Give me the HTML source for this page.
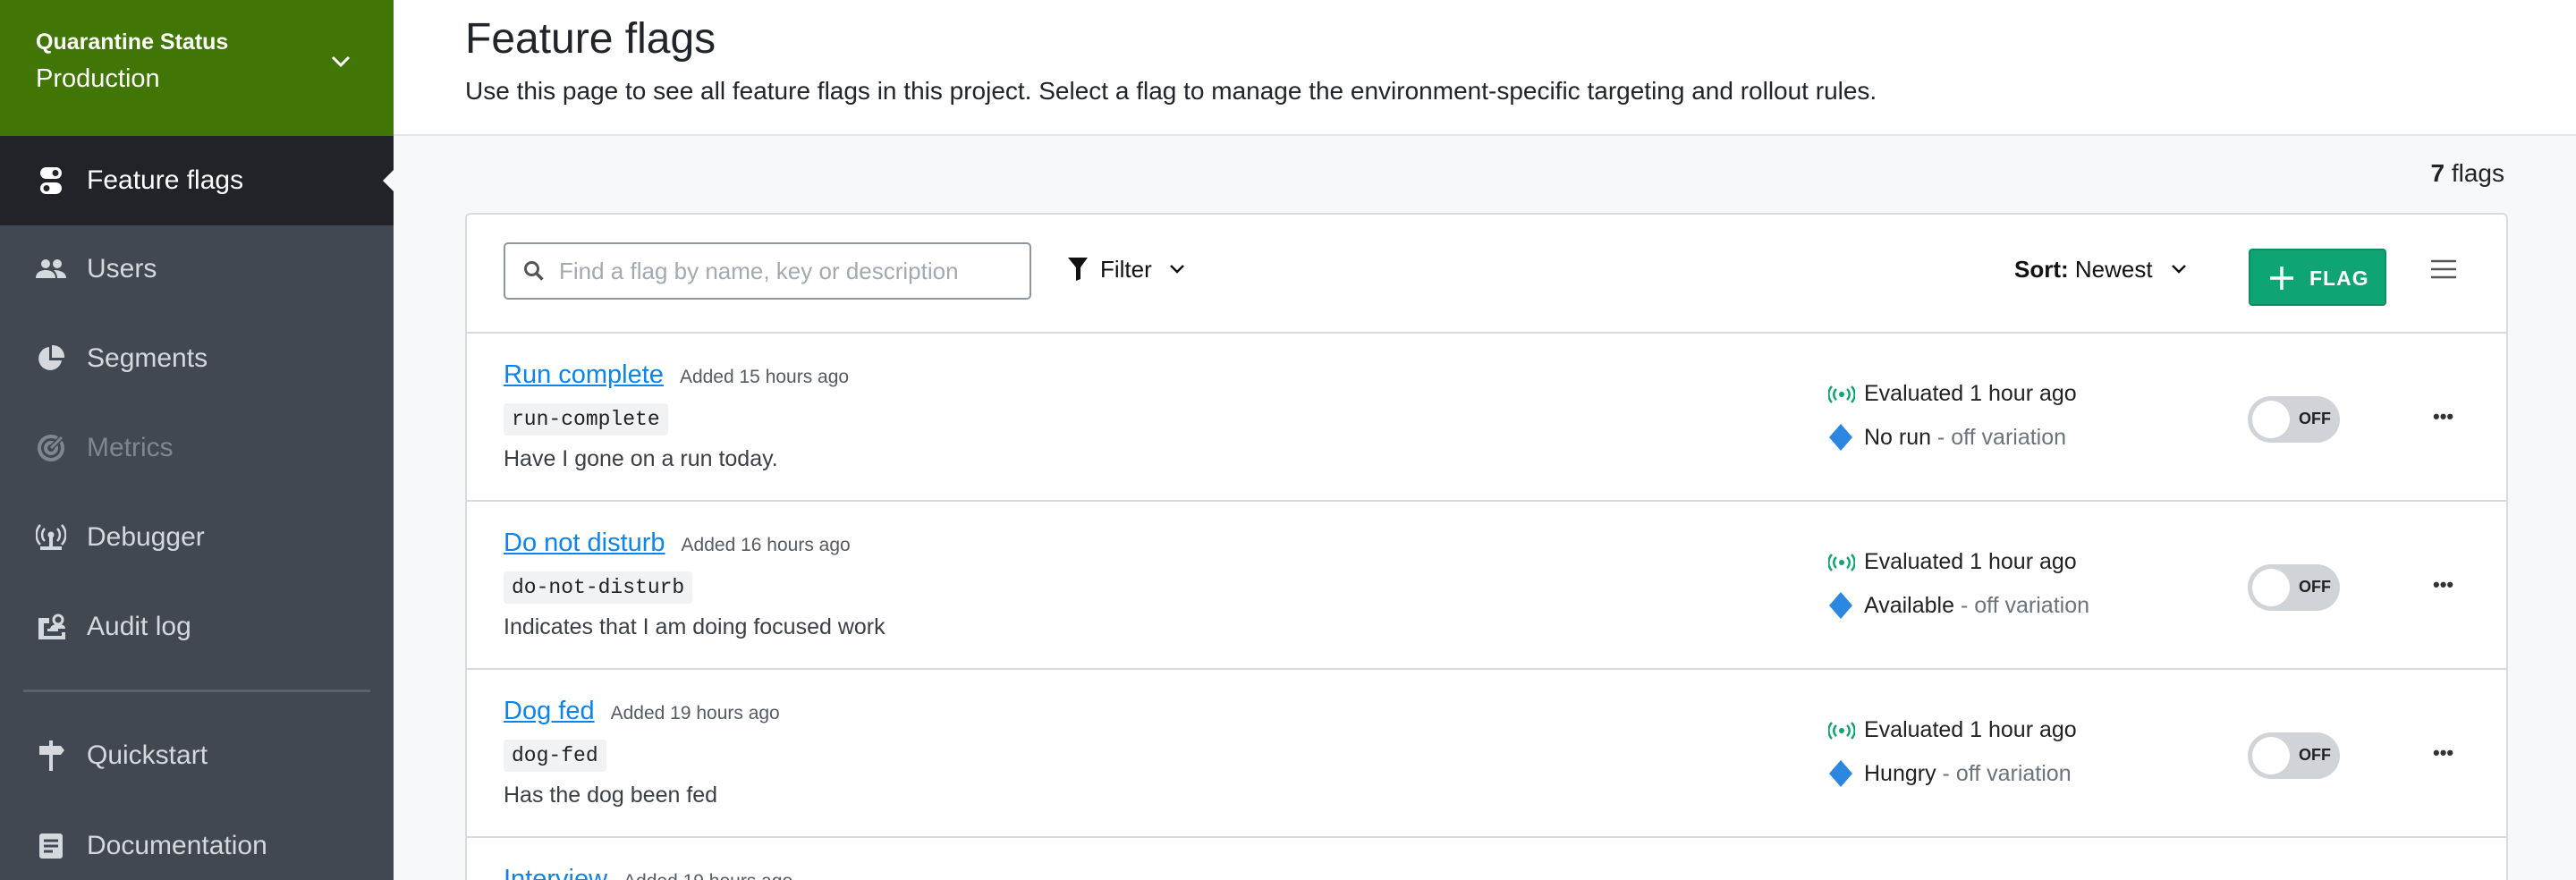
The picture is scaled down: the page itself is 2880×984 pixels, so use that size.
<!DOCTYPE html>
<html style="width:2880px;height:984px;overflow:hidden"><head><meta charset="utf-8"><style>
*{box-sizing:border-box;margin:0;padding:0}
body{width:2880px;height:984px;overflow:hidden;font-family:"Liberation Sans",sans-serif;background:#f7f8fa;position:relative;color:#212529}
.abs{position:absolute}
#side{left:0;top:0;width:440px;height:984px;background:#414851}
#env{left:0;top:0;width:440px;height:152px;background:#417505;color:#fff}
.nav{position:absolute;left:0;width:440px;height:100px;display:flex;align-items:center;color:#d5d9de;font-size:30px}
.nav .ic{width:34px;height:34px;margin-left:40px;margin-right:23px;display:flex;align-items:center;justify-content:center}
#main-h{left:440px;top:0;width:2440px;height:152px;background:#fff;border-bottom:2px solid #e2e5e9}
#card{left:520px;top:238px;width:2284px;height:746px;background:#fff;border:2px solid #d8dce1;border-bottom:none;border-radius:6px 6px 0 0;overflow:hidden}
.row{position:absolute;left:0;width:2280px;height:188px;border-top:2px solid #d8dce1}
.link{position:absolute;left:41px;top:30px;font-size:29px;color:#0d84ea;text-decoration:underline}
.added{font-size:21px;color:#555b62;margin-left:18px;text-decoration:none;display:inline-block}
.code{position:absolute;left:41px;top:78px;background:#f1f2f4;font-family:"Liberation Mono",monospace;font-size:23px;padding:5px 9px;border-radius:4px;color:#222}
.desc{position:absolute;left:41px;top:126px;font-size:25px;color:#3a3f45}
.ev{position:absolute;left:1522px;top:53px;font-size:25px;color:#222;display:flex;align-items:center}
.va{position:absolute;left:1522px;top:101px;font-size:25px;color:#222;display:flex;align-items:center}
.va span{color:#6b737c}
.tog{position:absolute;left:1991px;top:70px;width:103px;height:52px;border-radius:26px;background:#d0d4d9}
.tog:before{content:"";position:absolute;left:5px;top:5px;width:42px;height:42px;border-radius:50%;background:#fff}
.tog b{position:absolute;left:57px;top:15px;font-size:18px;color:#222}
.dots{position:absolute;left:2198px;top:88px;font-size:22px;letter-spacing:0px;line-height:10px;font-weight:bold;color:#333}
</style></head><body>
<div id="side" class="abs"></div>
<div id="env" class="abs">
 <div class="abs" style="left:40px;top:33px;font-size:25px;font-weight:bold">Quarantine Status</div>
 <div class="abs" style="left:40px;top:72px;font-size:29px">Production</div>
 <svg class="abs" style="left:368px;top:60px" width="26" height="18" viewBox="0 0 26 18"><path d="M4 4l9 9 9-9" stroke="#fff" stroke-width="3" fill="none"/></svg>
</div>
<div class="nav" style="top:152px;height:100px;background:#212328;color:#fff">
 <div class="ic"><svg width="26" height="34" viewBox="0 0 26 34"><rect x="1" y="2" width="24" height="13" rx="6.5" fill="#fff"/><rect x="1" y="19" width="24" height="13" rx="6.5" fill="#fff"/><circle cx="18" cy="8.5" r="3.5" fill="#212328"/><circle cx="8" cy="25.5" r="3.5" fill="#212328"/></svg></div>Feature flags
 <div class="abs" style="left:428px;top:37px;width:0;height:0;border-top:13px solid transparent;border-bottom:13px solid transparent;border-right:13px solid #f7f8fa"></div>
</div>
<div class="nav" style="top:251px"><div class="ic"><svg width="34" height="24" viewBox="0 0 34 24"><circle cx="11" cy="6" r="5" fill="#d5d9de"/><circle cx="24" cy="6" r="5" fill="#d5d9de"/><path d="M0 22c0-6 5-9 11-9s11 3 11 9z M20 13c6 0 14 2 14 9h-10c0-4-2-7-4-9z" fill="#d5d9de"/></svg></div>Users</div>
<div class="nav" style="top:351px"><div class="ic"><svg width="32" height="32" viewBox="0 0 32 32"><path d="M14 3a13 13 0 1 0 14 15H14z" fill="#d5d9de"/><path d="M17 1a13 13 0 0 1 14 14H17z" fill="#d5d9de"/></svg></div>Segments</div>
<div class="nav" style="top:451px;color:#7f868e"><div class="ic"><svg width="32" height="32" viewBox="0 0 32 32"><circle cx="16" cy="16" r="13" stroke="#7f868e" stroke-width="4" fill="none"/><circle cx="16" cy="16" r="6" stroke="#7f868e" stroke-width="4" fill="none"/><path d="M16 16L30 2" stroke="#414851" stroke-width="6"/><path d="M16 16L28 4" stroke="#7f868e" stroke-width="3"/></svg></div>Metrics</div>
<div class="nav" style="top:551px"><div class="ic"><svg width="34" height="32" viewBox="0 0 34 32"><circle cx="17" cy="13" r="3.5" fill="#d5d9de"/><path d="M10 6a10 10 0 0 0 0 14M24 6a10 10 0 0 1 0 14M5 2a16 16 0 0 0 0 22M29 2a16 16 0 0 1 0 22" stroke="#d5d9de" stroke-width="2.5" fill="none"/><path d="M15 16h4v10h-4zM5 26h24v4H5z" fill="#d5d9de"/></svg></div>Debugger</div>
<div class="nav" style="top:651px"><div class="ic"><svg width="32" height="32" viewBox="0 0 32 32"><path d="M2 6h12v6H8v14h20v-4h4v8H2z M12 18h12v3H12z" fill="#d5d9de"/><circle cx="24" cy="8" r="5" stroke="#d5d9de" stroke-width="3" fill="none"/><path d="M15 18c1-4 5-5 9-5s8 1 8 5z" fill="#d5d9de"/></svg></div>Audit log</div>
<div class="abs" style="left:26px;top:771px;width:388px;height:3px;background:#5b626b"></div>
<div class="nav" style="top:795px"><div class="ic"><svg width="30" height="34" viewBox="0 0 30 34"><path d="M13 0h4v34h-4z M2 6h24l4 5-4 5H2z" fill="#d5d9de"/></svg></div>Quickstart</div>
<div class="nav" style="top:896px"><div class="ic"><svg width="28" height="30" viewBox="0 0 28 30"><rect x="1" y="1" width="26" height="28" rx="3" fill="#d5d9de"/><path d="M6 9h16M6 15h16M6 21h10" stroke="#414851" stroke-width="3"/></svg></div>Documentation</div>

<div id="main-h" class="abs">
 <div class="abs" style="left:80px;top:16px;font-size:48px;color:#212529">Feature flags</div>
 <div class="abs" style="left:80px;top:86px;font-size:28px;color:#212529">Use this page to see all feature flags in this project. Select a flag to manage the environment-specific targeting and rollout rules.</div>
</div>
<div class="abs" style="left:2680px;top:178px;font-size:28px;color:#212529;width:120px;text-align:right"><b>7</b> flags</div>

<div id="card" class="abs">
 <div class="abs" style="left:41px;top:31px;width:590px;height:64px;border:2px solid #8d959e;border-radius:5px">
  <svg class="abs" style="left:20px;top:18px" width="24" height="24" viewBox="0 0 24 24"><circle cx="9.5" cy="9.5" r="7" stroke="#555" stroke-width="3" fill="none"/><path d="M14.5 14.5l7 7" stroke="#555" stroke-width="3.5"/></svg>
  <div class="abs" style="left:60px;top:15px;font-size:26px;color:#a3a9b0">Find a flag by name, key or description</div>
 </div>
 <svg class="abs" style="left:672px;top:48px" width="22" height="26" viewBox="0 0 22 26"><path d="M0 0h22l-8 11v13l-5 2V11z" fill="#111"/></svg>
 <div class="abs" style="left:708px;top:46px;font-size:26px;color:#111">Filter</div>
 <svg class="abs" style="left:785px;top:55px" width="18" height="12" viewBox="0 0 18 12"><path d="M2 2l7 7 7-7" stroke="#111" stroke-width="2.5" fill="none"/></svg>
 <div class="abs" style="left:1730px;top:46px;font-size:26px;color:#111"><b>Sort:</b> Newest</div>
 <svg class="abs" style="left:1905px;top:55px" width="18" height="12" viewBox="0 0 18 12"><path d="M2 2l7 7 7-7" stroke="#111" stroke-width="2.5" fill="none"/></svg>
 <div class="abs" style="left:1992px;top:38px;width:154px;height:64px;background:#0fa474;border:2px solid #0d8f64;border-radius:4px;color:#fff">
  <svg class="abs" style="left:22px;top:18px" width="26" height="26" viewBox="0 0 26 26"><path d="M13 0v26M0 13h26" stroke="#fff" stroke-width="3.5"/></svg>
  <div class="abs" style="left:66px;top:18px;font-size:23px;font-weight:bold;letter-spacing:1px">FLAG</div>
 </div>
 <svg class="abs" style="left:2196px;top:50px" width="28" height="22" viewBox="0 0 28 22"><path d="M0 2h28M0 11h28M0 20h28" stroke="#555" stroke-width="2.5"/></svg>

 <div class="row" style="top:131px">
  <div class="link">Run complete<span class="added">Added 15 hours ago</span></div>
  <div class="code">run-complete</div>
  <div class="desc">Have I gone on a run today.</div>
  <div class="ev"><svg width="30" height="20" viewBox="0 0 30 20" style="margin-right:10px"><circle cx="15" cy="10" r="3" fill="#0fa474"/><path d="M9 4a8 8 0 0 0 0 12M21 4a8 8 0 0 1 0 12M4 1a13 13 0 0 0 0 18M26 1a13 13 0 0 1 0 18" stroke="#0fa474" stroke-width="2.5" fill="none"/></svg>Evaluated 1 hour ago</div>
  <div class="va"><svg width="28" height="30" viewBox="0 0 28 30" style="margin-right:12px"><path d="M14 0l13 15-13 15L1 15z" fill="#2c87e0"/></svg>No run&nbsp;<span>- off variation</span></div>
  <div class="tog"><b>OFF</b></div>
  <div class="dots">•••</div>
 </div>
 <div class="row" style="top:319px">
  <div class="link">Do not disturb<span class="added">Added 16 hours ago</span></div>
  <div class="code">do-not-disturb</div>
  <div class="desc">Indicates that I am doing focused work</div>
  <div class="ev"><svg width="30" height="20" viewBox="0 0 30 20" style="margin-right:10px"><circle cx="15" cy="10" r="3" fill="#0fa474"/><path d="M9 4a8 8 0 0 0 0 12M21 4a8 8 0 0 1 0 12M4 1a13 13 0 0 0 0 18M26 1a13 13 0 0 1 0 18" stroke="#0fa474" stroke-width="2.5" fill="none"/></svg>Evaluated 1 hour ago</div>
  <div class="va"><svg width="28" height="30" viewBox="0 0 28 30" style="margin-right:12px"><path d="M14 0l13 15-13 15L1 15z" fill="#2c87e0"/></svg>Available&nbsp;<span>- off variation</span></div>
  <div class="tog"><b>OFF</b></div>
  <div class="dots">•••</div>
 </div>
 <div class="row" style="top:507px">
  <div class="link">Dog fed<span class="added">Added 19 hours ago</span></div>
  <div class="code">dog-fed</div>
  <div class="desc">Has the dog been fed</div>
  <div class="ev"><svg width="30" height="20" viewBox="0 0 30 20" style="margin-right:10px"><circle cx="15" cy="10" r="3" fill="#0fa474"/><path d="M9 4a8 8 0 0 0 0 12M21 4a8 8 0 0 1 0 12M4 1a13 13 0 0 0 0 18M26 1a13 13 0 0 1 0 18" stroke="#0fa474" stroke-width="2.5" fill="none"/></svg>Evaluated 1 hour ago</div>
  <div class="va"><svg width="28" height="30" viewBox="0 0 28 30" style="margin-right:12px"><path d="M14 0l13 15-13 15L1 15z" fill="#2c87e0"/></svg>Hungry&nbsp;<span>- off variation</span></div>
  <div class="tog"><b>OFF</b></div>
  <div class="dots">•••</div>
 </div>
 <div class="row" style="top:695px">
  <div class="link">Interview<span class="added">Added 19 hours ago</span></div>
 </div>
</div>
</body></html>
